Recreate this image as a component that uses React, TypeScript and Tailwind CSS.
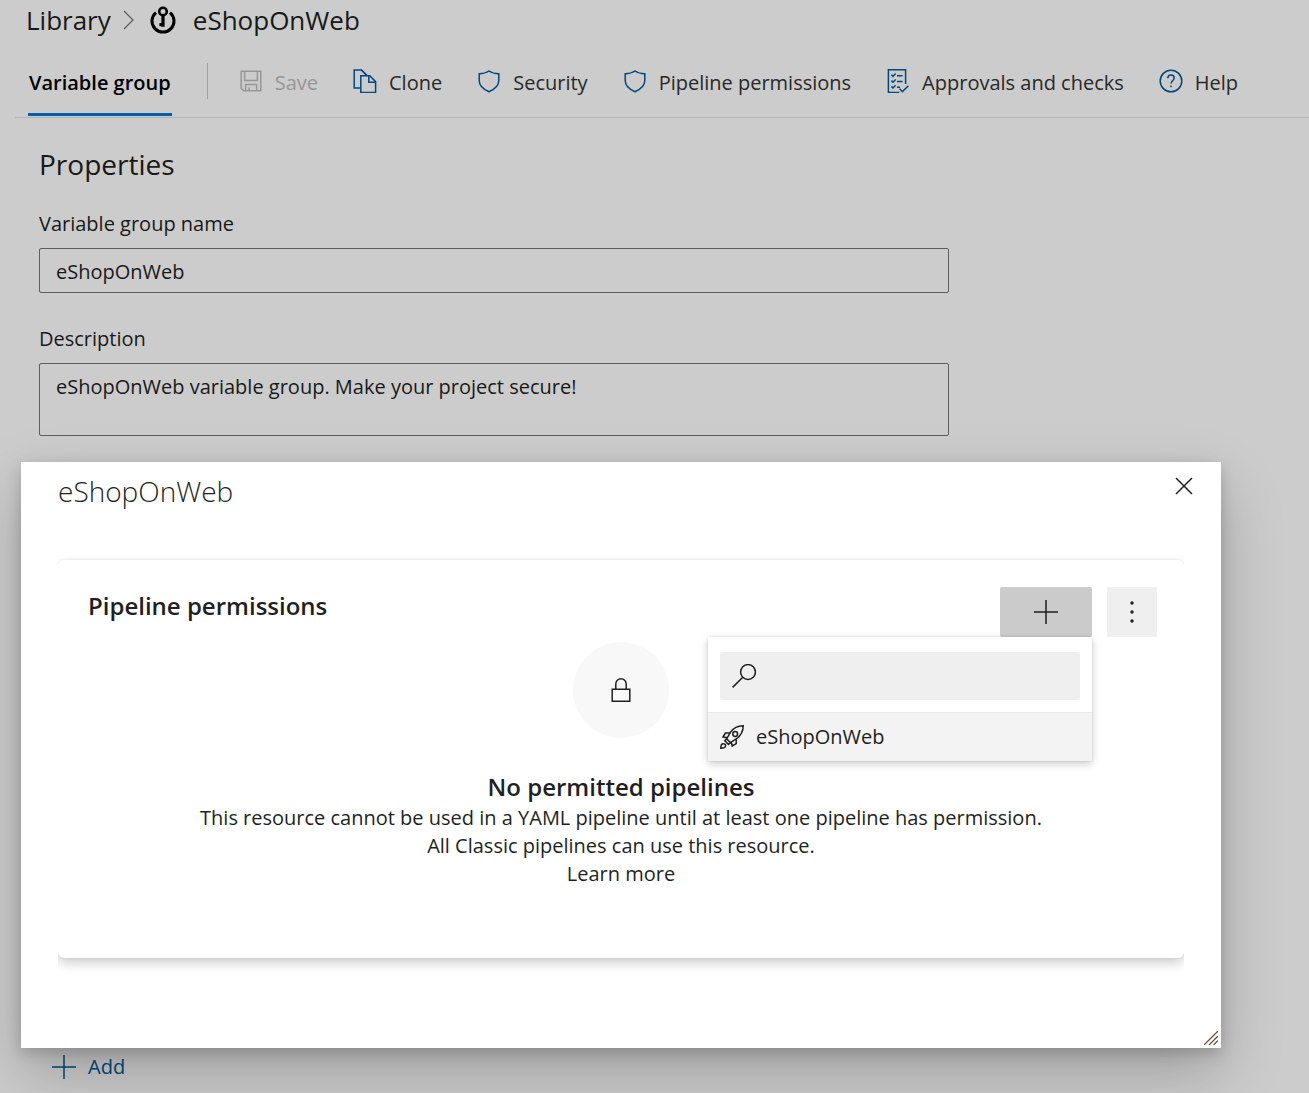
import { useState } from 'react';
import type { ReactNode } from 'react';

/* ---------- icons ---------- */

function Icon({ children, className = '' }: { children: ReactNode; className?: string }) {
  return (
    <svg
      viewBox="0 0 24 24"
      className={`h-6 w-6 shrink-0 ${className}`}
      fill="none"
      stroke="currentColor"
      strokeWidth="1.5"
      aria-hidden="true"
    >
      {children}
    </svg>
  );
}

const SaveIcon = () => (
  <Icon>
    <path d="M2.2 2.2h19.6v19.6H4.6l-2.4-2.4z" />
    <path d="M5.6 2.2v9.2h12.8V2.2M6.6 21.8v-6.2h11v6.2M10 21.8v-3.2" />
  </Icon>
);

const CloneIcon = () => (
  <Icon>
    <path d="M7.8 19H1.2V1h7.2l5 5" />
    <path d="M7.8 6.8h9L22.600 12.600v11H7.800z" />
    <path d="M15.8 6.800v6.400h6.600M8.400 1l5.800 5.800" />
  </Icon>
);

const ShieldIcon = () => (
  <Icon>
    <path d="M12 2c2.800 1.900 6 2.700 9.800 2.700v6.700c0 5-3.600 8.500-9.800 11.300C5.800 19.900 2.200 16.400 2.200 11.400V4.700C6 4.700 9.200 3.900 12 2z" />
  </Icon>
);

const ChecklistIcon = () => (
  <Icon>
    <path d="M19.600 15V.8H2.400v22.600h11" />
    <path d="M5.400 5.800l1.600 1.600 2.600-2.800M5.400 11.600l1.600 1.600 2.600-2.800M5.400 17.400l1.600 1.600 2.600-2.800" />
    <path d="M11 6.800h5.600M11 12.600h5.600M11 18.200h3" />
    <path d="M13.600 19.800l2.800 2.800 6-5.800" />
  </Icon>
);

const HelpIcon = () => (
  <Icon>
    <circle cx="12" cy="12" r="10.800" />
    <path d="M8.800 9.200c0-2 1.400-3.200 3.200-3.200s3.200 1.200 3.200 3c0 2.600-3.200 2.800-3.200 5.600M12 16.400v1.800" />
  </Icon>
);

const VariableGroupIcon = () => (
  <svg viewBox="0 0 28 28" className="h-7 w-7" fill="none" stroke="currentColor" aria-hidden="true">
    <path d="M7 6.600a11 11 0 1 0 14 0" strokeWidth="3" />
    <circle cx="14" cy="5.500" r="3.800" strokeWidth="2.600" />
    <path d="M14 9.400v11.400" strokeWidth="3.200" />
    <path d="M14 18.600h-3.600" strokeWidth="3" />
  </svg>
);

const PlusIcon = () => (
  <Icon>
    <path d="M12 0v24M0 12h24" />
  </Icon>
);

const MoreIcon = () => (
  <Icon>
    <g fill="currentColor" stroke="none">
      <circle cx="12" cy="3" r="1.700" />
      <circle cx="12" cy="12" r="1.700" />
      <circle cx="12" cy="21" r="1.700" />
    </g>
  </Icon>
);

const RocketIcon = () => (
  <Icon>
    <path d="M23.200.8c-5.200 0-9.600 2-12.800 6.600L6.600 13.800l3.800 3.800 6.200-4C21.200 10.400 23.200 6 23.200.8z" />
    <circle cx="15.200" cy="9" r="2.400" />
    <path d="M10.200 8H5.400l-2.400 4 4.200.800M16.200 14v4.600l-4 2.400-1-4" />
    <path d="M6.600 13.800l-1.800 2 3.600 3.600 2-1.800" />
    <path d="M.8 23.200c0-3 .8-4.400 2.400-4.400s2.400 1 2.400 2c0 1.600-1.600 2.400-4.800 2.400z" />
  </Icon>
);

/* ---------- page behind the dialog ---------- */

const actions = [
  { label: 'Save', icon: <SaveIcon />, disabled: true },
  { label: 'Clone', icon: <CloneIcon /> },
  { label: 'Security', icon: <ShieldIcon /> },
  { label: 'Pipeline permissions', icon: <ShieldIcon /> },
  { label: 'Approvals and checks', icon: <ChecklistIcon /> },
  { label: 'Help', icon: <HelpIcon /> },
];

function Breadcrumb() {
  return (
    <header className="flex h-11 items-center pb-1 pl-[26px] text-[26px]">
      <a href="#library">Library</a>
      <svg viewBox="0 0 12 20" className="ml-3 h-5 w-3 text-[#777]" fill="none" stroke="currentColor" aria-hidden="true">
        <path d="M1 1l9 9-9 9" strokeWidth="1.300" />
      </svg>
      <span className="ml-3.5 text-black">
        <VariableGroupIcon />
      </span>
      <h1 className="ml-4">eShopOnWeb</h1>
    </header>
  );
}

function Toolbar() {
  return (
    <nav className="ml-[15px] flex h-[74px] items-center gap-[35px] border-b border-[#e0e0e0] pt-1 pl-[13px] whitespace-nowrap">
      <button className="mb-px self-stretch border-b-[3px] border-[#0078d4] px-px pt-1 font-semibold text-black">
        Variable group
      </button>
      <span className="-mr-1 -mt-1 h-9 w-px bg-[#c8c8c8]" />
      {actions.map((a) => (
        <button
          key={a.label}
          disabled={a.disabled}
          className="flex items-center gap-3 text-[#333] disabled:text-[#bdbdbd]"
        >
          <span className={a.disabled ? 'pb-1' : 'pb-1 text-[#005a9e]'}>{a.icon}</span>
          {a.label}
        </button>
      ))}
    </nav>
  );
}

function Properties() {
  const [name, setName] = useState('eShopOnWeb');
  const [description, setDescription] = useState('eShopOnWeb variable group. Make your project secure!');

  return (
    <main className="px-[39px] pt-[26px]">
      <h2 className="text-[28px] leading-10">Properties</h2>
      <div className="mt-[26px] max-w-[910px]">
        <label htmlFor="group-name" className="block">
          Variable group name
        </label>
        <input
          id="group-name"
          value={name}
          onChange={(e) => setName(e.target.value)}
          className="mt-2.5 block h-[45px] w-full rounded-xs border border-[#767676] px-4 pt-0.5"
        />
        <label htmlFor="group-description" className="mt-8 block">
          Description
        </label>
        <textarea
          id="group-description"
          value={description}
          onChange={(e) => setDescription(e.target.value)}
          className="mt-2.5 block h-[73px] w-full resize-none rounded-xs border border-[#767676] px-4 py-[9px]"
        />
      </div>
      <button className="mt-[617px] ml-[13px] flex items-center gap-3 text-[#005a9e]">
        <PlusIcon />
        Add
      </button>
    </main>
  );
}

/* ---------- dialog ---------- */

function PipelinePicker() {
  return (
    <div className="absolute top-full right-0 w-96 bg-white shadow-[0_3px_8px_rgba(0,0,0,0.2),0_0_2px_rgba(0,0,0,0.12)]">
      <label className="mx-3 mt-[15px] mb-3 flex h-12 items-center rounded-xs bg-[#efefef] px-3">
        <Icon>
          <circle cx="16" cy="8" r="7.400" />
          <path d="M10.800 13.200L.6 23.400" />
        </Icon>
        <input aria-label="Search pipelines" className="ml-3 min-w-0 flex-1 bg-transparent outline-none" />
      </label>
      <button className="flex h-[49px] w-full items-center gap-3 border-t border-[#eaeaea] bg-[#f3f3f3] px-3">
        <RocketIcon />
        eShopOnWeb
      </button>
    </div>
  );
}

function PermissionsCard() {
  return (
    <section className="mt-9 h-[398px] rounded-md bg-white pt-[27px] shadow-[0_5px_12px_rgba(0,0,0,0.2),0_0_3px_rgba(0,0,0,0.08)] [clip-path:inset(-20px_0)]">
      <div className="flex pr-[27px] pl-[30px]">
        <h3 className="flex-1 text-2xl leading-[38px] font-semibold">Pipeline permissions</h3>
        <div className="relative">
          <button aria-label="Add pipeline" className="flex h-[50px] w-[92px] items-center justify-center rounded-xs bg-[#cbcbcb]">
            <PlusIcon />
          </button>
          <PipelinePicker />
        </div>
        <button aria-label="More actions" className="ml-[15px] flex h-[50px] w-[50px] items-center justify-center bg-[#efefef]">
          <MoreIcon />
        </button>
      </div>
      <div className="mt-[5px] flex flex-col items-center text-center">
        <div className="flex h-24 w-24 items-center justify-center rounded-full bg-[#f8f8f8]">
          <Icon>
            <path d="M3.200 11.200h17.600v12H3.200zM6.800 11.200V6a5.200 5.200 0 0 1 10.400 0v5.200" />
          </Icon>
        </div>
        <h4 className="mt-[31px] text-2xl leading-[35px] font-semibold">No permitted pipelines</h4>
        <p>This resource cannot be used in a YAML pipeline until at least one pipeline has permission.</p>
        <p>All Classic pipelines can use this resource.</p>
        <a href="#learn-more">Learn more</a>
      </div>
    </section>
  );
}

function PermissionsDialog() {
  return (
    <div
      role="dialog"
      aria-labelledby="dialog-title"
      className="absolute top-[462px] right-[88px] left-[21px] h-[586px] bg-white px-[37px] shadow-[0_26px_58px_rgba(0,0,0,0.22),0_5px_14px_rgba(0,0,0,0.18)]"
    >
      <div className="flex h-[62px] items-start">
        <h2 id="dialog-title" className="flex-1 text-[28px] leading-[58px] font-light">
          eShopOnWeb
        </h2>
        <button aria-label="Close" className="-mr-3 pt-3">
          <Icon>
            <path d="M4 4l16 16M20 4L4 20" />
          </Icon>
        </button>
      </div>
      <PermissionsCard />
      <svg viewBox="0 0 14 14" className="absolute right-[3px] bottom-[3px] h-3.5 w-3.5" stroke="#6b5040" strokeWidth="1.300" aria-hidden="true">
        <path d="M0 14L14 0M5 14l9-9M9.500 14l4.500-4.500" />
      </svg>
    </div>
  );
}

export default function App() {
  return (
    <div className="relative min-h-screen overflow-hidden bg-white font-['Open_Sans','Noto_Sans',sans-serif] text-xl leading-7 text-[#1f1f1f]">
      <Breadcrumb />
      <Toolbar />
      <Properties />
      <div className="absolute inset-0 bg-black/20">
        <PermissionsDialog />
      </div>
    </div>
  );
}
